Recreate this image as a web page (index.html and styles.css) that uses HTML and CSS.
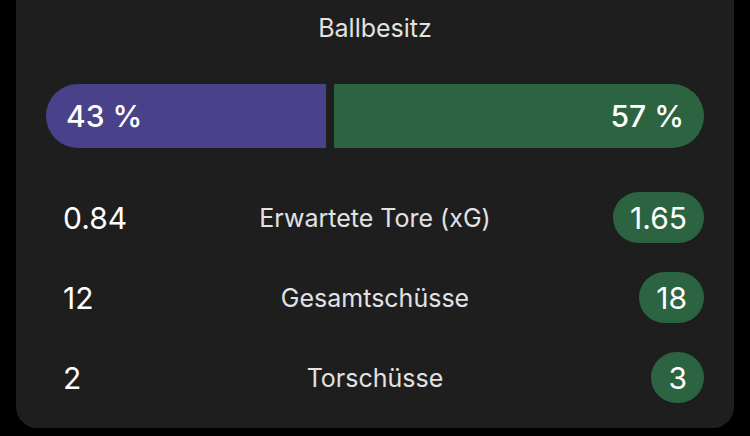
FILE: index.html
```html
<!DOCTYPE html>
<html lang="de">
<head>
<meta charset="utf-8">
<link rel="stylesheet" href="styles.css">
</head>
<body>
<div class="card">
  <div class="title">Ballbesitz</div>
  <div class="bar">
    <div class="seg home" style="flex-grow: 43"><span class="pct">43 %</span></div>
    <div class="seg away" style="flex-grow: 57"><span class="pct">57 %</span></div>
  </div>
  <div class="rows">
    <div class="row">
      <div class="val left">0.84</div>
      <div class="label">Erwartete Tore (xG)</div>
      <div class="val right"><span class="badge">1.65</span></div>
    </div>
    <div class="row">
      <div class="val left">12</div>
      <div class="label">Gesamtschüsse</div>
      <div class="val right"><span class="badge">18</span></div>
    </div>
    <div class="row">
      <div class="val left">2</div>
      <div class="label">Torschüsse</div>
      <div class="val right"><span class="badge">3</span></div>
    </div>
  </div>
</div>
</body>
</html>
```
FILE: styles.css
```css
html, body {
  margin: 0;
  padding: 0;
  background: #000;
}
body {
  font-family: Inter, "Noto Sans", sans-serif;
  width: 750px;
  height: 436px;
  overflow: hidden;
}
.card {
  margin: 0 16px;
  height: 428px;
  box-sizing: border-box;
  background: #1e1e1e;
  border-radius: 0 0 21px 21px;
  padding: 13px 30px 0;
}
.title {
  text-align: center;
  color: #e2e2e2;
  font-size: 25px;
  line-height: 30px;
}
.bar {
  margin-top: 41px;
  display: flex;
  gap: 8px;
  height: 64px;
}
.seg {
  flex-basis: 0;
  min-width: 0;
  display: flex;
  align-items: center;
  color: #fff;
  font-size: 30px;
  font-weight: 500;
}
.pct {
  padding: 0 20px;
  white-space: nowrap;
}
.home {
  background: #49428b;
  border-radius: 32px 0 0 32px;
}
.away {
  background: #2c6442;
  border-radius: 0 32px 32px 0;
  justify-content: flex-end;
}
.rows {
  margin-top: 44px;
  display: flex;
  flex-direction: column;
  gap: 29px;
}
.row {
  display: grid;
  grid-template-columns: 1fr auto 1fr;
  align-items: center;
  height: 51px;
}
.val {
  color: #fff;
  font-size: 30px;
}
.left {
  padding-left: 17px;
}
.right {
  display: flex;
  justify-content: flex-end;
}
.label {
  color: #e2e2e2;
  font-size: 25px;
  text-align: center;
}
.badge {
  background: #2c6442;
  height: 51px;
  min-width: 51px;
  box-sizing: border-box;
  padding: 0 17px;
  border-radius: 26px;
  display: flex;
  align-items: center;
  justify-content: center;
}
```
